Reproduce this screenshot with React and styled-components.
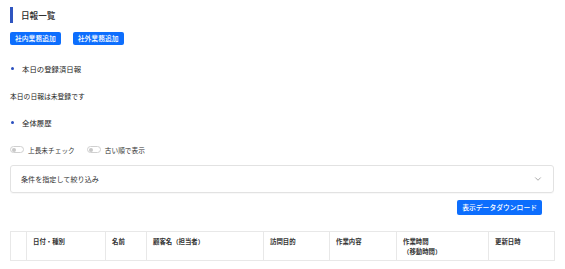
import React from "react";
import styled, { createGlobalStyle } from "styled-components";
import { ChevronDown } from "lucide-react";

const GlobalStyle = createGlobalStyle`
  body {
    margin: 0;
    background: #fff;
    font-family: "Noto Sans CJK JP", "Noto Sans", sans-serif;
    color: #212529;
  }
`;

const Page = styled.div`
  width: 565px;
  padding: 7px 11px 0 10px;
  box-sizing: border-box;
`;

const Header = styled.div`
  display: flex;
  align-items: center;
  height: 16px;
`;

const HeaderBar = styled.span`
  width: 3px;
  height: 16px;
  background-color: #2f55c0;
`;

const Title = styled.h1`
  margin: 0 0 0 8px;
  font-size: 8.6px;
  font-weight: 500;
  color: #2a2a2a;
  line-height: 16px;
`;

const ButtonRow = styled.div`
  display: flex;
  gap: 12px;
  margin-top: 9px;
`;

const BlueButton = styled.button`
  height: ${(p) => p.h || 13}px;
  padding: 0 5px;
  border: none;
  border-radius: 2px;
  background-color: #0d6efd;
  color: #fff;
  font-family: "Noto Sans CJK JP", sans-serif;
  font-size: 6.8px;
  font-weight: 500;
  line-height: 1;
  cursor: pointer;
`;

const BulletRow = styled.div`
  display: flex;
  align-items: center;
  height: 12px;
  margin-top: ${(p) => p.mt}px;
`;

const Dot = styled.span`
  flex: none;
  width: 3px;
  height: 3px;
  border-radius: 50%;
  background-color: #2a4fbf;
  margin: 0 8px 0 1px;
`;

const BulletText = styled.span`
  font-size: 7.4px;
  color: #222;
`;

const Notice = styled.p`
  margin: 16.5px 0 0;
  height: 10px;
  line-height: 10px;
  font-size: 6.8px;
  color: #222;
`;

const ToggleRow = styled.div`
  display: flex;
  align-items: center;
  gap: 12px;
  height: 10px;
  margin-top: 16px;
`;

const ToggleItem = styled.label`
  display: flex;
  align-items: center;
  gap: 4px;
  font-size: 6.7px;
  color: #333;
`;

const Switch = styled.span`
  position: relative;
  width: 14px;
  height: 7px;
  border: 1px solid #d0d0d0;
  border-radius: 4px;
  box-sizing: border-box;

  &::after {
    content: "";
    position: absolute;
    left: 1px;
    top: 0.5px;
    width: 4px;
    height: 4px;
    border-radius: 50%;
    background-color: #c8c8c8;
  }
`;

const Accordion = styled.div`
  display: flex;
  align-items: center;
  justify-content: space-between;
  height: 28px;
  margin-top: 10px;
  padding: 0 10px 0 10px;
  border: 1px solid #e2e2e2;
  border-radius: 3px;
  box-shadow: 0 1px 1px rgba(0, 0, 0, 0.03);
  box-sizing: border-box;
`;

const AccordionLabel = styled.span`
  font-size: 7.1px;
  color: #333;
`;

const DownloadRow = styled.div`
  display: flex;
  justify-content: flex-end;
  padding-right: 12px;
  margin-top: 7px;
`;

const Table = styled.table`
  width: 544px;
  margin-top: 16px;
  border-collapse: collapse;
  table-layout: fixed;
`;

const Th = styled.th`
  height: 29px;
  padding: 5px 5px 0 6px;
  border: 1px solid #e8e8e8;
  text-align: left;
  vertical-align: top;
  font-size: 6.4px;
  font-weight: 700;
  line-height: 10px;
  color: #333;
  box-sizing: border-box;
`;

const SubLine = styled.span`
  display: block;
`;

const columns = [
  { w: 16, label: "" },
  { w: 79, label: "日付・種別" },
  { w: 41, label: "名前" },
  { w: 117, label: "顧客名（担当者）" },
  { w: 66, label: "訪問目的" },
  { w: 67, label: "作業内容" },
  { w: 92, label: "作業時間", sub: "（移動時間）" },
  { w: 66, label: "更新日時" },
];

export default function App() {
  return (
    <>
      <GlobalStyle />
      <Page>
        <Header>
          <HeaderBar />
          <Title>日報一覧</Title>
        </Header>
        <ButtonRow>
          <BlueButton>社内業務追加</BlueButton>
          <BlueButton>社外業務追加</BlueButton>
        </ButtonRow>

        <BulletRow mt={17}>
          <Dot />
          <BulletText>本日の登録済日報</BulletText>
        </BulletRow>
        <Notice>本日の日報は未登録です</Notice>

        <BulletRow mt={16}>
          <Dot />
          <BulletText>全体履歴</BulletText>
        </BulletRow>

        <ToggleRow>
          <ToggleItem>
            <Switch />
            上長未チェック
          </ToggleItem>
          <ToggleItem>
            <Switch />
            古い順で表示
          </ToggleItem>
        </ToggleRow>

        <Accordion>
          <AccordionLabel>条件を指定して絞り込み</AccordionLabel>
          <ChevronDown size={10} color="#777" strokeWidth={1.5} />
        </Accordion>

        <DownloadRow>
          <BlueButton h={15}>表示データダウンロード</BlueButton>
        </DownloadRow>

        <Table>
          <colgroup>
            {columns.map((c, i) => (
              <col key={i} style={{ width: c.w }} />
            ))}
          </colgroup>
          <thead>
            <tr>
              {columns.map((c, i) => (
                <Th key={i}>
                  {c.label}
                  {c.sub && <SubLine>{c.sub}</SubLine>}
                </Th>
              ))}
            </tr>
          </thead>
        </Table>
      </Page>
    </>
  );
}
